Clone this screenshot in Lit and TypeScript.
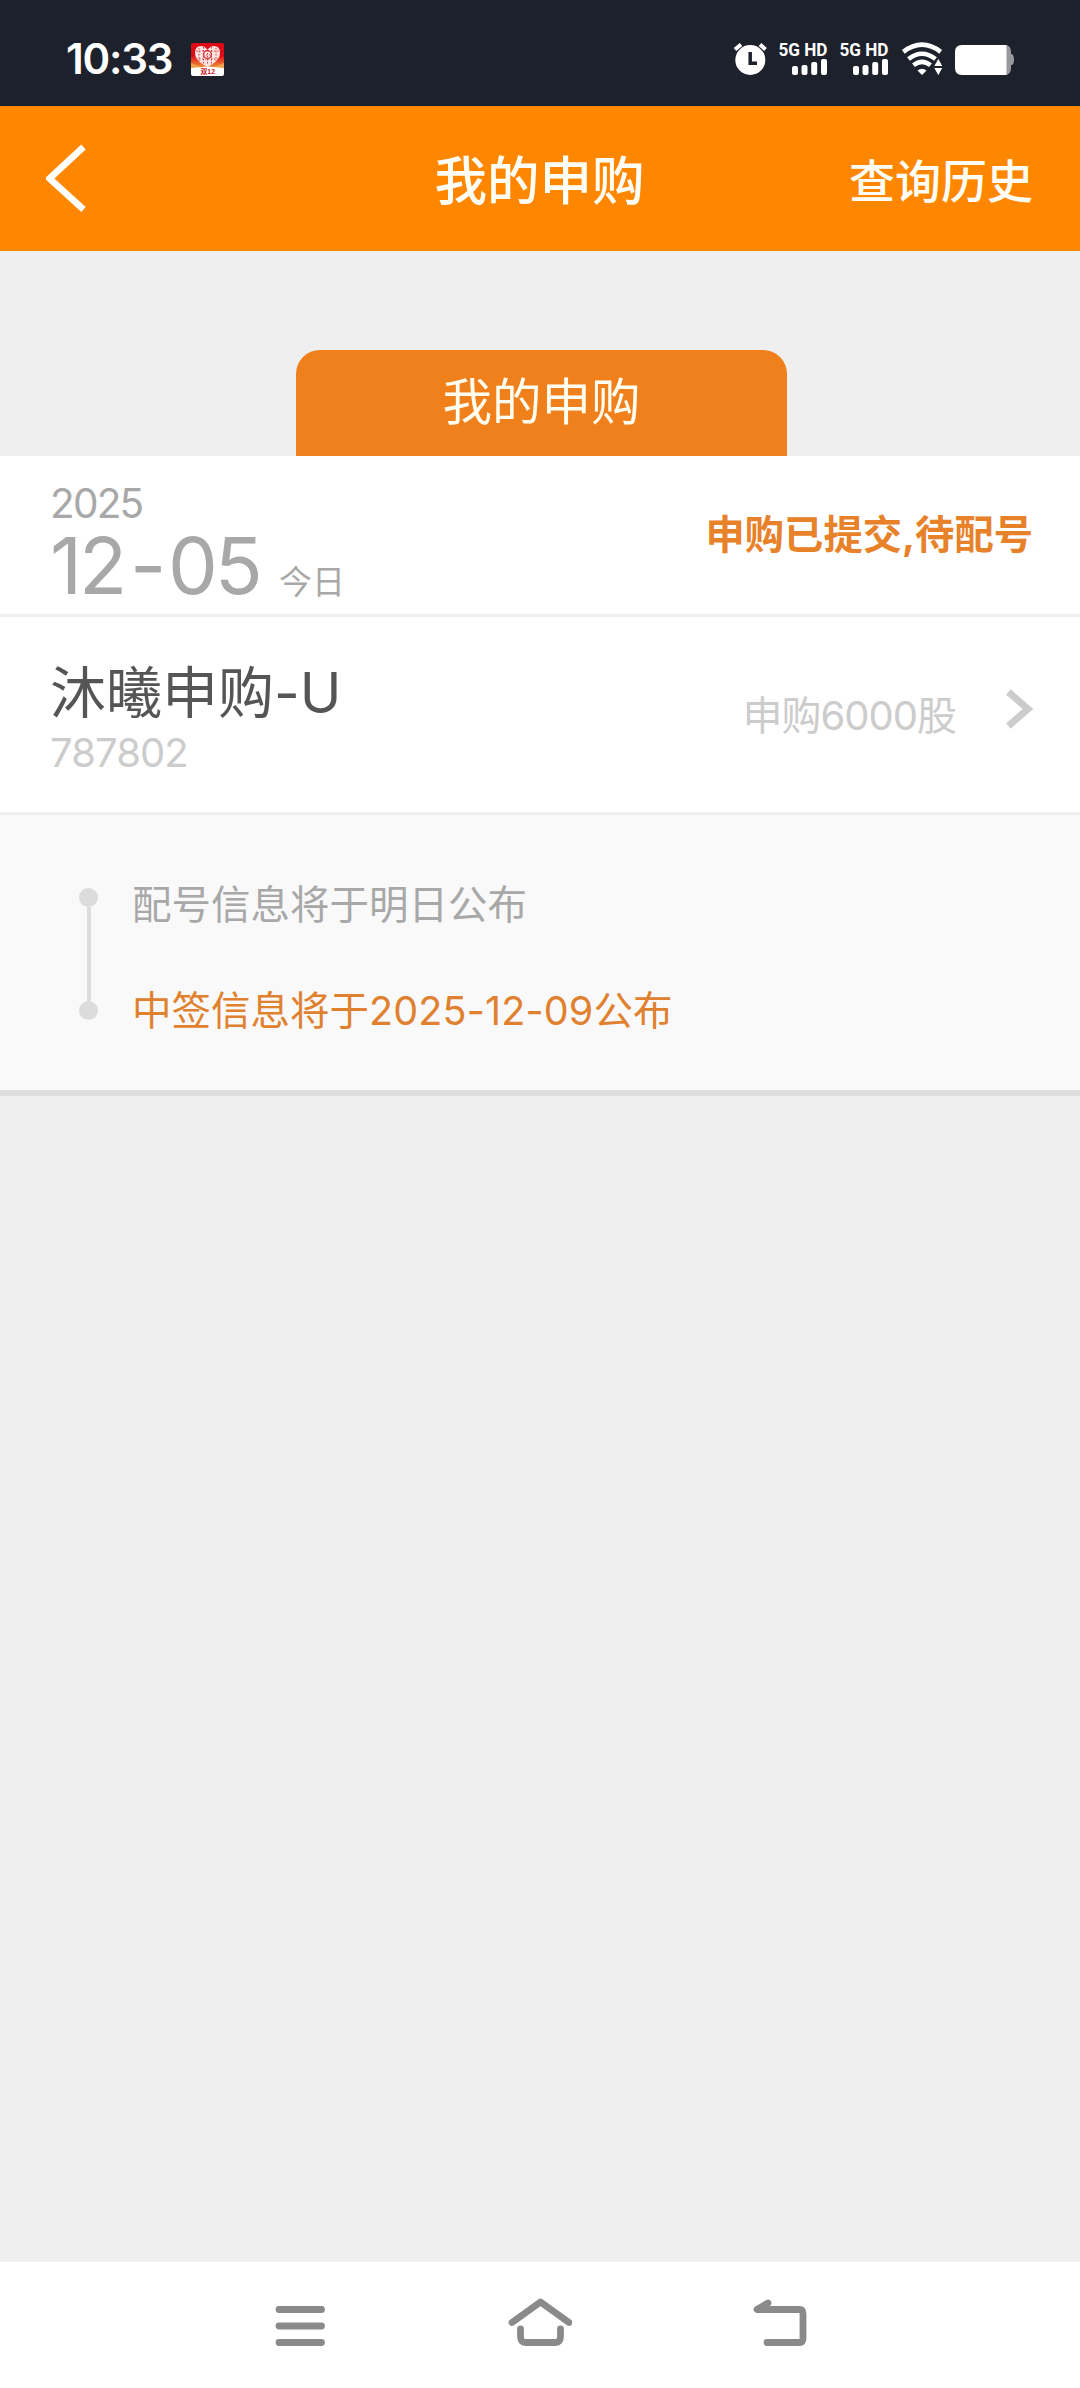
import { LitElement, html, css, svg } from "lit";
import { customElement, property } from "lit/decorators.js";

const FONT = css`Inter, "Noto Sans CJK SC", sans-serif`;

@customElement("status-bar")
class StatusBar extends LitElement {
  static styles = css`
    :host { display: flex; height: 106px; background: #1d212c; color: #fff; font-family: ${FONT};
      align-items: flex-start; justify-content: space-between; padding: 0 66px 0 66px; box-sizing: border-box; }
    .left, .right { display: flex; align-items: flex-start; padding-top: 42px; }
    .time { font-size: 42px; font-weight: 600; line-height: 34px; letter-spacing: -1.200px; width: 125px; white-space: nowrap; }
    .app { width: 33px; height: 33px; margin-top: 1px; }
    .sys { width: 281px; height: 34px; }
    svg { display: block; overflow: visible; }
    .promo { font-family: "Liberation Sans", "Noto Sans CJK SC", sans-serif; font-weight: 700; }
    .net { font-family: Roboto, sans-serif; font-weight: 700; }
  `;

  private signal(x: number) {
    return svg`<g transform="translate(${x} 0)">
      <text class="net" x="-0.500" y="14" font-size="19" textLength="49" lengthAdjust="spacingAndGlyphs">5G HD</text>
      <rect x="13" y="24" width="6" height="9" rx="2"/><rect x="22.5" y="23" width="6" height="10" rx="2"/>
      <rect x="32.2" y="20" width="6" height="13" rx="2"/><rect x="42" y="17" width="6" height="16" rx="2"/></g>`;
  }

  render() {
    return html`
      <div class="left">
        <span class="time">10:33</span>
        <svg class="app" viewBox="0 0 33 33">
          <defs><linearGradient id="g" x1="0" y1="0" x2="0" y2="1"><stop offset=".5" stop-color="#dc0b17"/><stop offset="1" stop-color="#f39a3b"/></linearGradient></defs>
          <path d="M2 0H31Q33 0 33 2V25H0V2Q0 0 2 0Z" fill="url(#g)"/>
          <path d="M0 20L12 25H21L33 20V25H0Z" fill="#f0a04b"/>
          <path d="M0 25L16.500 23.500L33 25V31Q33 33 31 33H2Q0 33 0 31Z" fill="#fff"/>
          <path d="M16.500 24C11 21 4 17 4 10Q4 3 10 3Q14 3 16.500 7Q19 3 23 3Q29 3 29 10C29 17 22 21 16.500 24Z" fill="#fbe3e0"/>
          <path d="M8 5V18M12.500 4V21M20.500 4V21M25 5V18M5 8H28M5 16H28M16.500 7V22M12 12H21" stroke="#dc2a34" stroke-width=".9" stroke-dasharray="1.500 1.500" fill="none"/>
          <circle cx="16.500" cy="11.500" r="4" fill="none" stroke="#d3101c" stroke-width="1"/>
          <text class="promo" x="9.500" y="31.200" font-size="7" textLength="14.500" lengthAdjust="spacingAndGlyphs" fill="#c4161c">双12</text>
        </svg>
      </div>
      <div class="right">
        <svg class="sys" viewBox="0 0 281 34" fill="#fff">
          <circle cx="17.300" cy="18" r="15"/>
          <path d="M2 7.500L8 2.500M27 2.500L32.500 7.500" stroke="#fff" stroke-width="4" />
          <path d="M17.200 10V21.300H24" stroke="#1d212c" stroke-width="3.500" fill="none"/>
          ${this.signal(46)}${this.signal(107)}
          <g fill="none" stroke="#fff" stroke-width="4.600">
            <path d="M170.300 9.800Q189 -4.500 207.700 9.800"/>
            <path d="M175.500 17Q189 6.500 202.500 17"/>
            <path d="M180.500 23.300Q189 16.500 197.500 23.300"/>
          </g>
          <path d="M184.500 28.500Q189 25 193.500 28.500L189 33Z"/>
          <path d="M200.500 24.500L205.300 16L210 24.500ZM200.500 25.500H210L205.300 34Z" stroke="#1d212c" stroke-width="1"/>
          <path d="M270 3H272Q278 3 278 10V12H279Q281 13 281 18Q281 22 279 23H278V26Q278 33 272 33H270Z" fill="#97999e"/>
          <path d="M229 3H273.500V33H229Q222 33 222 26V10Q222 3 229 3Z"/>
        </svg>
      </div>`;
  }
}

@customElement("title-bar")
class TitleBar extends LitElement {
  @property() heading = "";
  @property() action = "";
  static styles = css`
    :host { display: grid; grid-template-columns: 1fr auto 1fr; align-items: center; height: 145px; box-sizing: border-box;
      background: #ff8700; color: #fffef6; font-family: ${FONT}; font-weight: 500; padding: 0 47px 0 46px; }
    svg { display: block; width: 40px; height: 68px; margin-top: -2px; }
    .heading { font-size: 52.500px; line-height: 70px; padding-top: 4px; }
    .action { font-size: 46px; line-height: 60px; justify-self: end; padding-top: 4px; }
  `;
  render() {
    return html`
      <svg viewBox="0 0 40 68" fill="none" stroke="#fff" stroke-width="6.500"><path d="M37.500 3L3.500 34.500L37.500 65.500"/></svg>
      <span class="heading">${this.heading}</span>
      <span class="action">${this.action}</span>`;
  }
}

@customElement("subscription-card")
class SubscriptionCard extends LitElement {
  static styles = css`
    :host { display: block; font-family: ${FONT}; border-bottom: 6px solid #dedede; }
    .row { display: flex; justify-content: space-between; background: #fff; border-bottom: 3px solid #efefef; box-sizing: border-box; padding: 0 47px 0 50px; white-space: nowrap; }
    .day { height: 161px; color: #a8a8a8; }
    .stock { height: 198px; }
    .year { font-size: 40.500px; line-height: 40px; padding-top: 28px; letter-spacing: -1.800px; }
    .date { display: flex; align-items: baseline; line-height: 80px; padding-top: 1px; }
    .md { font-size: 79px; font-weight: 400; letter-spacing: -3.200px; width: 229px; }
    .dash { margin: 0 5px 0 6px; }
    .today { font-size: 33px; }
    .status { font-size: 39.300px; font-weight: 700; line-height: 50px; color: #e8822a; padding-top: 54px; }
    .name { font-size: 56px; line-height: 70px; color: #555; padding-top: 41px; }
    .code { font-size: 40px; line-height: 40px; color: #ccc; letter-spacing: -0.900px; padding-top: 5px; }
    .right { display: flex; align-items: flex-start; color: #ccc; }
    .amount { font-size: 40px; line-height: 50px; padding: 74px 49px 0 0; letter-spacing: -1px; }
    .go { width: 28px; height: 42px; margin-top: 71px; }
    .steps { display: flex; height: 275px; background: #f9f9f9; box-sizing: border-box; padding: 73px 0 0 79px; }
    .track { display: flex; flex-direction: column; align-items: center; width: 19px; margin-right: 34px; }
    .dot { width: 19px; height: 19px; border-radius: 50%; background: #dcdcdc; }
    .line { width: 4px; height: 94px; background: #dcdcdc; }
    .texts { font-size: 39.500px; line-height: 50px; color: #a8a8a8; display: flex; flex-direction: column; gap: 56px; margin-top: -8px; }
    .win { color: #e08130; white-space: nowrap; }
    .on { letter-spacing: 0.150px; }
  `;
  render() {
    return html`
      <div class="row day">
        <div>
          <div class="year">2025</div>
          <div class="date"><span class="md">12<span class="dash">-</span>05</span><span class="today">今日</span></div>
        </div>
        <div class="status">申购已提交,待配号</div>
      </div>
      <div class="row stock">
        <div><div class="name">沐曦申购-U</div><div class="code">787802</div></div>
        <div class="right">
          <span class="amount">申购6000股</span>
          <svg class="go" viewBox="0 0 28 42" fill="none" stroke="#ccc" stroke-width="7"><path d="M3.500 4L23 21L3.500 38"/></svg>
        </div>
      </div>
      <div class="steps">
        <div class="track"><i class="dot"></i><i class="line"></i><i class="dot"></i></div>
        <div class="texts"><span>配号信息将于明日公布</span><span class="win">中签信息将于<span class="on">2025-12-09</span>公布</span></div>
      </div>`;
  }
}

@customElement("nav-keys")
class NavKeys extends LitElement {
  static styles = css`
    :host { display: flex; height: 126px; background: #fff; align-items: center; justify-content: center; gap: 176px; box-sizing: border-box; padding-bottom: 5px; }
    svg { width: 64px; height: 50px; fill: none; stroke: #8a8a8a; stroke-width: 6.800px; stroke-linecap: round; stroke-linejoin: round; }
  `;
  render() {
    return html`
      <svg viewBox="0 0 64 50"><path d="M11 11.500H53.500M11 28H53.500M11 44.500H53.500"/></svg>
      <svg viewBox="0 0 64 50"><path d="M4 24.500L32.500 4L61 24.500M12.500 31V38Q12.500 44.500 17.500 44.500H47.500Q52.500 44.500 52.500 38V31"/></svg>
      <svg viewBox="0 0 64 50"><path d="M20 5L9 11.500H51.500Q55 11.500 55 16V40Q55 44.500 51.500 44.500H19"/></svg>`;
  }
}

@customElement("app-root")
class AppRoot extends LitElement {
  static styles = css`
    :host { display: flex; flex-direction: column; width: 1080px; height: 2388px; background: #efefef; font-family: ${FONT}; overflow: hidden; }
    .tabs { display: flex; justify-content: center; padding: 99px 0 0 3px; }
    .tab { width: 491px; height: 106px; border-radius: 24px 24px 0 0; background: #ef801c; color: #fffdf0; font-size: 49.500px;
      line-height: 104px; text-align: center; box-sizing: border-box; }
    .fill { flex: 1; }
  `;
  render() {
    return html`
      <status-bar></status-bar>
      <title-bar heading="我的申购" action="查询历史"></title-bar>
      <div class="tabs"><div class="tab">我的申购</div></div>
      <subscription-card></subscription-card>
      <div class="fill"></div>
      <nav-keys></nav-keys>`;
  }
}
